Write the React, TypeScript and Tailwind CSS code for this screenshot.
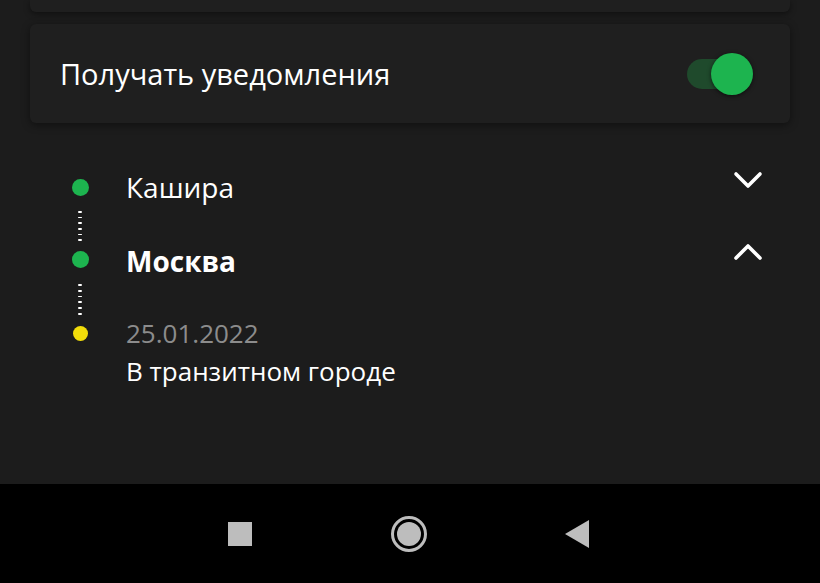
import { ChevronDown, ChevronUp } from "lucide-react";

const font = { fontFamily: '"Open Sans", "Noto Sans", sans-serif' };

function Dots() {
  return (
    <div className="flex flex-col items-center gap-[4px]">
      {[0, 1, 2, 3, 4, 5].map((i) => (
        <div key={i} className="h-[4px] w-[4px] rounded-full bg-white" />
      ))}
    </div>
  );
}

export default function App() {
  return (
    <div className="flex h-[583px] w-[820px] flex-col bg-[#1c1c1c] text-white" style={font}>
      <div className="flex-1 px-[30px]">
        <div className="h-[12px] rounded-b-md bg-[#1f1f1f] shadow-[0_2px_6px_rgba(0,0,0,0.45)]" />

        <div className="mt-[12px] flex h-[99px] items-center justify-between rounded-md bg-[#1f1f1f] pl-[30px] pr-[37px] shadow-[0_2px_8px_rgba(0,0,0,0.45)]">
          <span className="text-[29px] leading-none">Получать уведомления</span>
          <div className="relative h-[30px] w-[66px]">
            <div className="absolute left-0 top-0 h-[30px] w-[52px] rounded-full bg-[#1f4a2c]" />
            <div className="absolute right-0 top-1/2 h-[42px] w-[42px] -translate-y-1/2 rounded-full bg-[#1db44f] shadow-[0_1px_4px_rgba(0,0,0,0.6)]" />
          </div>
        </div>

        <div className="mt-[46px] grid grid-cols-[40px_1fr] gap-x-[26px] pl-[30px] pr-[30px]">
          <div className="flex h-[36px] items-center justify-center">
            <div className="h-[17px] w-[17px] rounded-full bg-[#1db44f]" />
          </div>
          <div className="flex h-[36px] items-center justify-between">
            <span className="text-[28px] leading-none">Кашира</span>
            <ChevronDown className="mb-[14px] mr-[-12px] h-[48px] w-[48px] text-white" strokeWidth={1.8} />
          </div>

          <div className="flex h-[36px] justify-center pt-[6px]">
            <Dots />
          </div>
          <div />

          <div className="flex h-[36px] items-center justify-center">
            <div className="h-[17px] w-[17px] rounded-full bg-[#1db44f]" />
          </div>
          <div className="flex h-[36px] items-center justify-between">
            <span className="mt-[3px] text-[28px] font-bold leading-none">Москва</span>
            <ChevronUp className="mb-[14px] mr-[-12px] h-[48px] w-[48px] text-white" strokeWidth={1.8} />
          </div>

          <div className="flex h-[38px] justify-center pt-[7px]">
            <Dots />
          </div>
          <div />

          <div className="flex h-[36px] items-center justify-center">
            <div className="h-[15px] w-[15px] rounded-full bg-[#f2dd0a]" />
          </div>
          <div className="flex h-[36px] items-center">
            <span className="text-[26px] leading-none text-[#8c8c8c]">25.01.2022</span>
          </div>

          <div />
          <div className="flex h-[40px] items-center">
            <span className="text-[26px] leading-none">В транзитном городе</span>
          </div>
        </div>
      </div>

      <div className="flex h-[99px] items-center bg-black">
        <div className="flex w-full items-center justify-between pl-[228px] pr-[231px]">
          <div className="h-[24px] w-[24px] bg-[#bdbdbd]" />
          <div className="flex h-[36px] w-[36px] items-center justify-center rounded-full border-[3px] border-[#bdbdbd]">
            <div className="h-[24px] w-[24px] rounded-full bg-[#bdbdbd]" />
          </div>
          <svg width="24" height="28" viewBox="0 0 24 28">
            <polygon points="24,0 24,28 0,14" fill="#bdbdbd" />
          </svg>
        </div>
      </div>
    </div>
  );
}
